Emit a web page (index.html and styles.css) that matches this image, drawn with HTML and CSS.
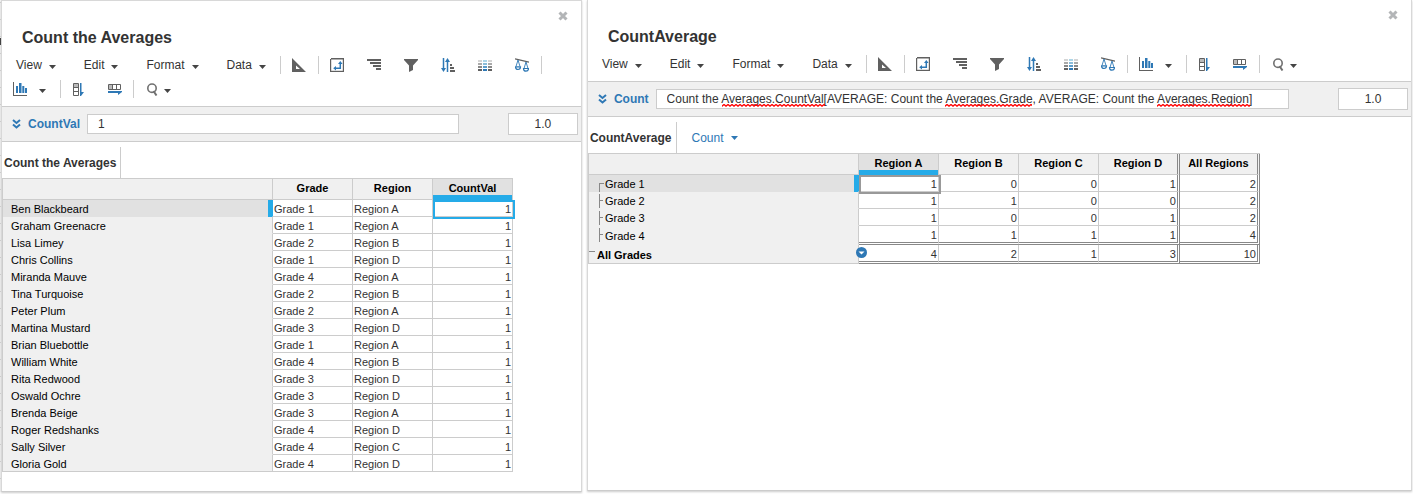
FILE: index.html
```html
<!DOCTYPE html>
<html lang="en">
<head>
  <meta charset="UTF-8">
  <meta name="viewport" content="width=device-width, initial-scale=1.0">
  <title>Count the Averages</title>
  <link rel="stylesheet" href="styles.css">
</head>
<body>
  <!-- shared icons -->
  <svg class="sprite" aria-hidden="true">
    <symbol id="i-caret" viewBox="0 0 7 4"><path d="M0 0h7L3.5 4z" fill="currentColor"/></symbol>
    <symbol id="i-close" viewBox="0 0 10 10"><path d="M1.5 1.5l7 7M8.500 1.500l-7 7" stroke="#b3b5b7" stroke-width="3"/></symbol>
    <symbol id="i-chevrons" viewBox="0 0 9 10"><path d="M1 1l3.500 3L8 1M1 5.500l3.500 3L8 5.500" fill="none" stroke="#2e78b5" stroke-width="2"/></symbol>
    <symbol id="i-design" viewBox="0 0 14 14"><path fill-rule="evenodd" d="M0 0l14 14H0zM4 7.500V11h4z" fill="#606060"/></symbol>
    <symbol id="i-pivot" viewBox="0 0 14 14">
      <path d="M0 1h1V0h13v14H0z" fill="#606060"/><path d="M1.200 1.500h11.600v11.300H1.200z" fill="#fff"/>
      <path d="M10.300 5v5.200H5" fill="none" stroke="#2e78b5" stroke-width="1.500"/><path d="M8 6l2.300-3 2.300 3zM6 8v4.400l-2.800-2.200z" fill="#2e78b5"/>
    </symbol>
    <symbol id="i-indent" viewBox="0 0 14 12"><path d="M0 0h14v2H0zM3 3h11v2H3zM6 6h8v2H6zM9 9h5v2H9z" fill="#606060"/></symbol>
    <symbol id="i-filter" viewBox="0 0 14 13"><path d="M0 0h14v1L9 6.500V11l-4 2V6.500L0 1z" fill="#606060"/></symbol>
    <symbol id="i-sort" viewBox="0 0 14 14">
      <path d="M2.500 0v11M6.500 3v11" stroke="#2e78b5" stroke-width="1.500"/><path d="M0 10h5l-2.500 4zM4 4h5L6.500 0z" fill="#2e78b5"/>
      <path d="M9 6h2v2H9zM9 9h4v2H9zM9 12h5v2H9z" fill="#606060"/>
    </symbol>
    <symbol id="i-heat" viewBox="0 0 14 11">
      <path d="M0 0h4v2H0zM10 0h4v2h-4z" fill="#d5d5d5"/><path d="M0 3h4v2H0zM10 3h4v2h-4z" fill="#aaa"/>
      <path d="M0 6h4v2H0zM10 6h4v2h-4z" fill="#888"/><path d="M0 9h4v2H0zM10 9h4v2h-4z" fill="#606060"/>
      <path d="M5 0h4v2H5z" fill="#add6e8"/><path d="M5 3h4v2H5z" fill="#8bbdda"/><path d="M5 6h4v2H5z" fill="#5b9ccb"/><path d="M5 9h4v2H5z" fill="#2e78b5"/>
    </symbol>
    <symbol id="i-scales" viewBox="0 0 14 14">
      <path d="M0 .8l14 3.400" stroke="#606060" stroke-width="1.300"/>
      <path d="M3 2L1 8.500M3 2l2 6.500M11 4L9 10.500M11 4l2 6.500" stroke="#2e78b5" stroke-width=".9" fill="none"/>
      <path d="M.5 8.800h5q0 2.700-2.500 2.700T.5 8.800zM8.500 10.500h5q0 2.700-2.500 2.700t-2.500-2.700z" fill="#fff" stroke="#2e78b5" stroke-width="1.200"/>
    </symbol>
    <symbol id="i-chart" viewBox="0 0 14 14"><path d="M0 0h1v13h13v1H0z" fill="#606060"/><path d="M3 4h2v7H3zM6 1h2.500v10H6zM9.300 4h2v7h-2zM12 6h2v5h-2z" fill="#2e78b5"/></symbol>
    <symbol id="i-column" viewBox="0 0 11 13">
      <path d="M.5.5h5v12h-5zM.5 4.500h5M.5 8.500h5" fill="#fff" stroke="#606060"/><path d="M1 1h4v3H1z" fill="#bbb"/>
      <path d="M7 0h1.500v9H11l-3 4H7z" fill="#2e78b5"/>
    </symbol>
    <symbol id="i-row" viewBox="0 0 14 11">
      <path d="M.5.5h12v5H.5zM4.500.5v5M8.500.5v5" fill="#fff" stroke="#606060"/><path d="M1 1h3v4H1z" fill="#bbb"/>
      <path d="M0 7h14v1l-4 3V9H0z" fill="#2e78b5"/>
    </symbol>
    <symbol id="i-search" viewBox="0 0 11 13"><circle cx="5" cy="5.200" r="4.200" fill="none" stroke="#707070" stroke-width="1.600"/><path d="M6.500 8l3 4.500" stroke="#707070" stroke-width="2"/></symbol>
  </svg>

  <div class="edge"></div>

  <section class="panel panel-source">
    <header class="panel-header">
      <h2>Count the Averages</h2>
      <button class="close" aria-label="Close"><svg width="10" height="10"><use href="#i-close"/></svg></button>
    </header>
    <div class="toolbar">
      <div class="group menus">
        <button class="menu">View<svg class="caret"><use href="#i-caret"/></svg></button>
        <button class="menu">Edit<svg class="caret"><use href="#i-caret"/></svg></button>
        <button class="menu">Format<svg class="caret"><use href="#i-caret"/></svg></button>
        <button class="menu">Data<svg class="caret"><use href="#i-caret"/></svg></button>
      </div>
      <div class="group">
        <button class="tool" aria-label="Design"><svg width="14" height="14"><use href="#i-design"/></svg></button>
      </div>
      <div class="group">
        <button class="tool" aria-label="Pivot"><svg width="14" height="14"><use href="#i-pivot"/></svg></button>
        <button class="tool" aria-label="Show levels"><svg width="14" height="12"><use href="#i-indent"/></svg></button>
        <button class="tool" aria-label="Filter"><svg width="14" height="13"><use href="#i-filter"/></svg></button>
        <button class="tool" aria-label="Sort"><svg width="14" height="14"><use href="#i-sort"/></svg></button>
        <button class="tool" aria-label="Conditional formatting"><svg width="14" height="11"><use href="#i-heat"/></svg></button>
        <button class="tool" aria-label="Breakback"><svg width="14" height="14"><use href="#i-scales"/></svg></button>
      </div>
      <div class="group">
        <button class="tool-menu" aria-label="Chart"><svg width="14" height="14"><use href="#i-chart"/></svg><svg class="caret"><use href="#i-caret"/></svg></button>
      </div>
      <div class="group copy">
        <button class="tool" aria-label="Copy down"><svg width="11" height="13"><use href="#i-column"/></svg></button>
        <button class="tool" aria-label="Copy across"><svg width="14" height="11"><use href="#i-row"/></svg></button>
      </div>
      <div class="group">
        <button class="tool-menu find" aria-label="Find"><svg width="11" height="13"><use href="#i-search"/></svg><svg class="caret"><use href="#i-caret"/></svg></button>
      </div>
    </div>
    <div class="formula-bar">
      <svg width="9" height="10"><use href="#i-chevrons"/></svg>
      <label for="formula1">CountVal</label>
      <div class="formula"><input type="text" id="formula1" value="1"></div>
      <input type="text" class="format" aria-label="Number format" value="1.0">
    </div>
    <div class="tabs">
      <span class="tab">Count the Averages</span>
    </div>
    <table class="grid">
      <thead>
        <tr><td class="corner"></td><th>Grade</th><th>Region</th><th class="selected">CountVal</th></tr>
      </thead>
      <tbody>
        <tr class="current"><th>Ben Blackbeard</th><td>Grade 1</td><td>Region A</td><td class="num active">1</td></tr>
        <tr><th>Graham Greenacre</th><td>Grade 1</td><td>Region A</td><td class="num">1</td></tr>
        <tr><th>Lisa Limey</th><td>Grade 2</td><td>Region B</td><td class="num">1</td></tr>
        <tr><th>Chris Collins</th><td>Grade 1</td><td>Region D</td><td class="num">1</td></tr>
        <tr><th>Miranda Mauve</th><td>Grade 4</td><td>Region A</td><td class="num">1</td></tr>
        <tr><th>Tina Turquoise</th><td>Grade 2</td><td>Region B</td><td class="num">1</td></tr>
        <tr><th>Peter Plum</th><td>Grade 2</td><td>Region A</td><td class="num">1</td></tr>
        <tr><th>Martina Mustard</th><td>Grade 3</td><td>Region D</td><td class="num">1</td></tr>
        <tr><th>Brian Bluebottle</th><td>Grade 1</td><td>Region A</td><td class="num">1</td></tr>
        <tr><th>William White</th><td>Grade 4</td><td>Region B</td><td class="num">1</td></tr>
        <tr><th>Rita Redwood</th><td>Grade 3</td><td>Region D</td><td class="num">1</td></tr>
        <tr><th>Oswald Ochre</th><td>Grade 3</td><td>Region D</td><td class="num">1</td></tr>
        <tr><th>Brenda Beige</th><td>Grade 3</td><td>Region A</td><td class="num">1</td></tr>
        <tr><th>Roger Redshanks</th><td>Grade 4</td><td>Region D</td><td class="num">1</td></tr>
        <tr><th>Sally Silver</th><td>Grade 4</td><td>Region C</td><td class="num">1</td></tr>
        <tr><th>Gloria Gold</th><td>Grade 4</td><td>Region D</td><td class="num">1</td></tr>
      </tbody>
    </table>
  </section>

  <section class="panel panel-result">
    <header class="panel-header">
      <h2>CountAverage</h2>
      <button class="close" aria-label="Close"><svg width="10" height="10"><use href="#i-close"/></svg></button>
    </header>
    <div class="toolbar">
      <div class="group menus">
        <button class="menu">View<svg class="caret"><use href="#i-caret"/></svg></button>
        <button class="menu">Edit<svg class="caret"><use href="#i-caret"/></svg></button>
        <button class="menu">Format<svg class="caret"><use href="#i-caret"/></svg></button>
        <button class="menu">Data<svg class="caret"><use href="#i-caret"/></svg></button>
      </div>
      <div class="group">
        <button class="tool" aria-label="Design"><svg width="14" height="14"><use href="#i-design"/></svg></button>
      </div>
      <div class="group">
        <button class="tool" aria-label="Pivot"><svg width="14" height="14"><use href="#i-pivot"/></svg></button>
        <button class="tool" aria-label="Show levels"><svg width="14" height="12"><use href="#i-indent"/></svg></button>
        <button class="tool" aria-label="Filter"><svg width="14" height="13"><use href="#i-filter"/></svg></button>
        <button class="tool" aria-label="Sort"><svg width="14" height="14"><use href="#i-sort"/></svg></button>
        <button class="tool" aria-label="Conditional formatting"><svg width="14" height="11"><use href="#i-heat"/></svg></button>
        <button class="tool" aria-label="Breakback"><svg width="14" height="14"><use href="#i-scales"/></svg></button>
      </div>
      <div class="group">
        <button class="tool-menu" aria-label="Chart"><svg width="14" height="14"><use href="#i-chart"/></svg><svg class="caret"><use href="#i-caret"/></svg></button>
      </div>
      <div class="group copy">
        <button class="tool" aria-label="Copy down"><svg width="11" height="13"><use href="#i-column"/></svg></button>
        <button class="tool" aria-label="Copy across"><svg width="14" height="11"><use href="#i-row"/></svg></button>
      </div>
      <div class="group">
        <button class="tool-menu find" aria-label="Find"><svg width="11" height="13"><use href="#i-search"/></svg><svg class="caret"><use href="#i-caret"/></svg></button>
      </div>
    </div>
    <div class="formula-bar">
      <svg width="9" height="10"><use href="#i-chevrons"/></svg>
      <label for="formula2">Count</label>
      <div class="formula">
        <input type="text" id="formula2" value="Count the Averages.CountVal[AVERAGE: Count the Averages.Grade, AVERAGE: Count the Averages.Region]">
        <span class="squiggle squiggle-countval"></span>
        <span class="squiggle squiggle-grade"></span>
        <span class="squiggle squiggle-region"></span>
      </div>
      <input type="text" class="format" aria-label="Number format" value="1.0">
    </div>
    <div class="tabs">
      <span class="tab">CountAverage</span>
      <button class="page-select">Count<svg class="caret"><use href="#i-caret"/></svg></button>
    </div>
    <table class="grid">
      <thead>
        <tr><td class="corner"></td><th class="selected">Region A</th><th>Region B</th><th>Region C</th><th class="before-total">Region D</th><th class="total">All Regions</th></tr>
      </thead>
      <tbody>
        <tr class="current"><th class="branch first">Grade 1</th><td class="num active muted">1</td><td class="num">0</td><td class="num">0</td><td class="num before-total">1</td><td class="num total">2</td></tr>
        <tr><th class="branch">Grade 2</th><td class="num">1</td><td class="num">1</td><td class="num">0</td><td class="num before-total">0</td><td class="num total">2</td></tr>
        <tr><th class="branch">Grade 3</th><td class="num">1</td><td class="num">0</td><td class="num">0</td><td class="num before-total">1</td><td class="num total">2</td></tr>
        <tr class="last-item"><th class="branch">Grade 4</th><td class="num">1</td><td class="num">1</td><td class="num">1</td><td class="num before-total">1</td><td class="num total">4</td></tr>
        <tr class="total-row"><th>All Grades<button class="expand" aria-label="Row menu"><svg width="11" height="11" viewBox="0 0 11 11"><circle cx="5.5" cy="5.5" r="5.5" fill="#2e78b5"/><path d="M2.500 4.500h6l-3 3z" fill="#fff"/></svg></button></th><td class="num">4</td><td class="num">2</td><td class="num">1</td><td class="num before-total">3</td><td class="num total">10</td></tr>
      </tbody>
    </table>
  </section>
</body>
</html>
```
FILE: styles.css
```css
* {
  box-sizing: border-box;
}
body {
  margin: 0;
  min-height: 100vh;
  padding-bottom: 2px;
  display: flex;
  font-family: "Liberation Sans", Arial, sans-serif;
  font-size: 12px;
  color: #333;
  background: #fff;
}
button {
  border: 0;
  padding: 0;
  background: none;
  font: inherit;
  color: inherit;
  cursor: pointer;
}
svg {
  display: block;
  flex: none;
}
.sprite {
  position: absolute;
  width: 0;
  height: 0;
}

/* sliver of the sheet behind the panels */
.edge {
  flex: none;
  width: 1px;
  background: linear-gradient(#000, #000) 0 38px / 1px 7px no-repeat,
    repeating-linear-gradient(#ccc 0 1px, #f4f4f4 1px 17px) 0 2px;
}

.panel {
  border: 1px solid #d8d8d8;
  border-bottom-color: #ccc;
  box-shadow: 0 1px 2px #ccc;
  background: #fff;
}
.panel-source {
  flex: 581 1 0;
  margin-right: 5px;
}
.panel-result {
  flex: 826 1 0;
  border-top: 0;
  margin-right: 1px;
  margin-bottom: 1px;
}
.panel-header {
  position: relative;
  padding: 27px 20px 5px;
}
.panel-header h2 {
  margin: 0;
  font-size: 16px;
  line-height: 20px;
}
.close {
  position: absolute;
  top: 10px;
  right: 13px;
}

.toolbar {
  display: flex;
  flex-wrap: wrap;
  padding-bottom: 5px;
  border-bottom: 1px solid #ccc;
}
.group {
  display: flex;
  align-items: center;
  gap: 1px;
  height: 24px;
}
.group:not(:last-child)::after {
  content: "";
  width: 1px;
  height: 18px;
  background: #ccc;
}
.menus {
  gap: 0;
}
.menus::after {
  margin-left: 1px;
}
.caret {
  width: 7px;
  height: 4px;
  color: #444;
}
.menu {
  display: flex;
  align-items: center;
  gap: 7px;
  height: 24px;
  padding: 0 13px 0 14px;
}
.menu + .menu {
  padding-left: 15px;
}
.menu .caret,
.tool-menu .caret {
  margin-top: 3px;
}
.tool {
  display: flex;
  align-items: center;
  justify-content: center;
  width: 36px;
  height: 24px;
}
.copy .tool {
  width: 35px;
}
.tool-menu {
  display: flex;
  align-items: center;
  gap: 12px;
  height: 24px;
  padding: 0 13px 0 11px;
}
.find {
  gap: 6px;
  padding-left: 13px;
}

.formula-bar {
  display: flex;
  align-items: center;
  height: 35px;
  padding: 0 3px 0 10px;
  background: #f0f0f0;
  border-bottom: 1px solid #ccc;
}
.formula-bar label {
  margin: 0 7px;
  font-weight: bold;
  color: #2e78b5;
}
.formula {
  position: relative;
  flex: 1;
  margin-right: 49px;
}
.formula-bar input {
  display: block;
  width: 100%;
  height: 20px;
  padding: 0 10px;
  border: 1px solid #ccc;
  background: #fff;
  font: inherit;
  color: #333;
}
.formula-bar .format {
  flex: none;
  width: 70px;
  height: 22px;
  text-align: center;
}

/* spelling marks under unknown words */
.squiggle {
  position: absolute;
  bottom: 2px;
  height: 3px;
  background: url("data:image/svg+xml,%3Csvg xmlns='http://www.w3.org/2000/svg' width='4' height='3'%3E%3Cpath d='M-1 3L2 .5l3 2.500' fill='none' stroke='red' stroke-width='1.300'/%3E%3C/svg%3E") repeat-x;
}
.squiggle-countval {
  left: 66px;
  width: 103px;
}
.squiggle-grade {
  left: 289px;
  width: 87px;
}
.squiggle-region {
  left: 501px;
  width: 93px;
}

.tabs {
  display: flex;
  padding-top: 5px;
  height: 36px;
}
.tab {
  padding: 1px 4px 0 2px;
  line-height: 31px;
  font-weight: bold;
  border-right: 1px solid #ccc;
}
.page-select {
  display: flex;
  align-items: center;
  gap: 7px;
  margin-left: 15px;
  color: #2e78b5;
}
.page-select .caret {
  color: #2e78b5;
}

.grid {
  border-collapse: separate;
  border-spacing: 0;
  border-left: 1px solid #ccc;
  border-top: 1px solid #ccc;
  font-size: 11px;
  line-height: 14px;
}
.grid th,
.grid td {
  position: relative;
  width: 80px;
  padding: 2px 1px 0;
  border-right: 1px solid #ccc;
  border-bottom: 1px solid #ccc;
  text-align: left;
  white-space: nowrap;
}
.grid thead th,
.grid .corner {
  height: 21px;
  padding: 0 1px 2px;
  background: #f0f0f0;
  color: #000;
  text-align: center;
}
.grid .corner,
.grid tbody th {
  width: 270px;
}
.grid tbody th {
  padding-left: 8px;
  background: #f0f0f0;
  border-bottom-color: #f0f0f0;
  color: #000;
  font-weight: normal;
}
.grid tbody tr:last-child th {
  border-bottom-color: #ccc;
}
.grid .num {
  text-align: right;
}
.grid thead .selected {
  background: #e1e1e1;
}
.grid .selected::after {
  content: "";
  position: absolute;
  left: 0;
  right: 0;
  bottom: -1px;
  height: 5px;
  background: #25abe8;
}
.grid .current th {
  background: #e1e1e1;
  border-bottom-color: #e1e1e1;
  border-right-color: #25abe8;
}
.grid .current th::after {
  content: "";
  position: absolute;
  top: 0;
  right: 0;
  bottom: -1px;
  width: 4px;
  background: #25abe8;
}
.grid .active::after {
  content: "";
  position: absolute;
  z-index: 1;
  inset: 0 -3px -3px 0;
  border: 2px solid #25abe8;
}
.grid .muted::after {
  border-color: #999;
}

/* totals */
.grid .before-total,
.grid .total {
  border-right: 3px double #888;
}
.grid .before-total {
  width: 81px;
}
.grid .last-item td,
.grid .total-row td {
  border-bottom: 3px double #888;
}
.grid .total-row th {
  font-weight: bold;
}

/* hierarchy lines beside the row names */
.grid tbody .branch {
  padding-left: 16px;
}
.branch::before {
  content: "";
  position: absolute;
  left: 10px;
  top: 2px;
  width: 1px;
  height: 14px;
  background: #888;
}
.branch.first::before {
  top: 8px;
  width: 4px;
  height: 9px;
  border-left: 1px solid #888;
  border-top: 1px solid #888;
  background: none;
}
.branch:not(.first)::after {
  content: "";
  position: absolute;
  left: 10px;
  top: 8px;
  width: 4px;
  height: 1px;
  background: #888;
}
.total-row th::before {
  content: "";
  position: absolute;
  left: 0;
  top: 6px;
  width: 6px;
  height: 1px;
  background: #888;
}
.expand {
  position: absolute;
  z-index: 1;
  top: 2px;
  right: -9px;
}
```
